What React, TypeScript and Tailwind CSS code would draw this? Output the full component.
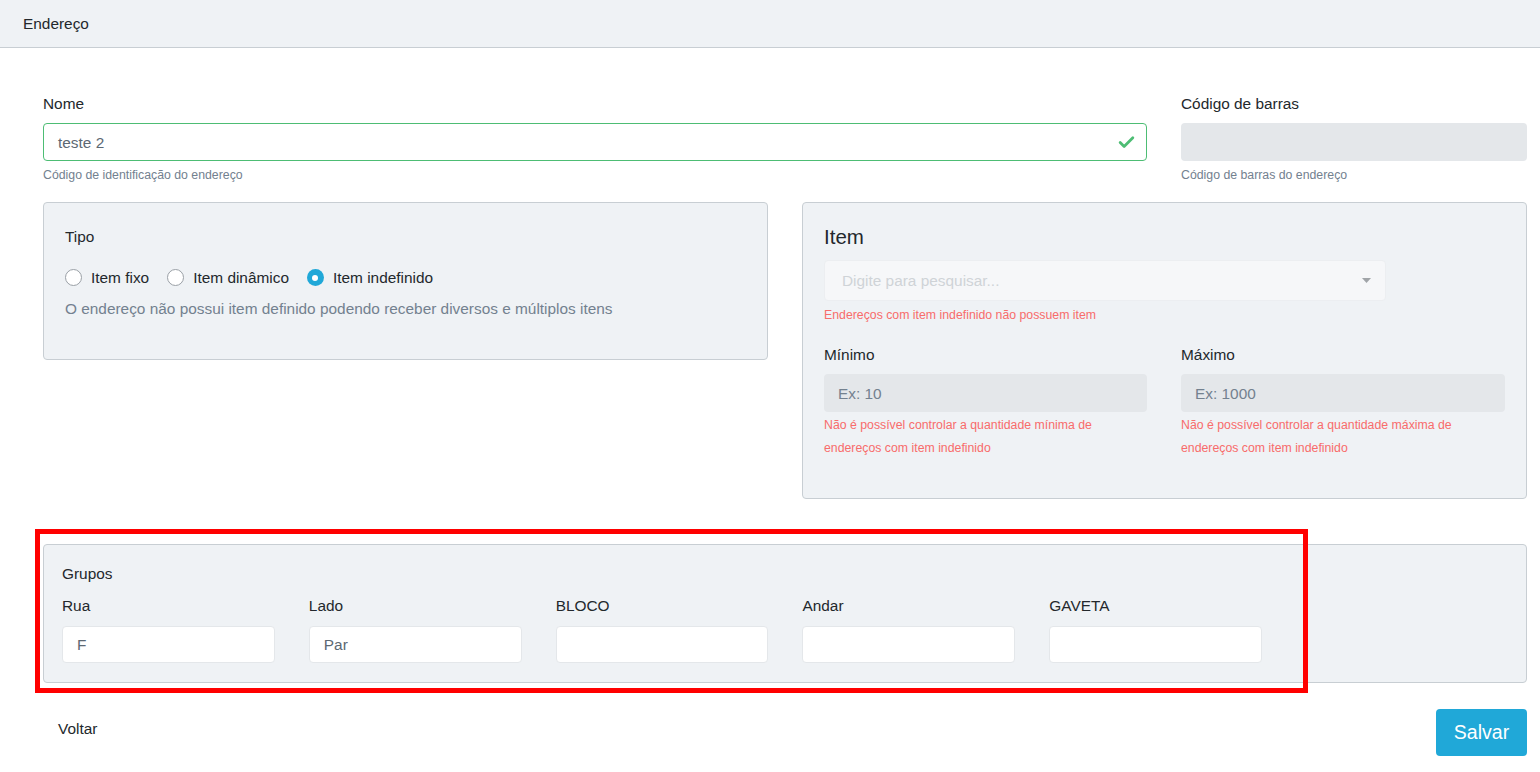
import { Check } from "lucide-react";

const font = { fontFamily: '"Liberation Sans", Arial, sans-serif' };

function Radio({ label, checked }: { label: string; checked?: boolean }) {
  return (
    <label className="flex items-center gap-[9px]">
      {checked ? (
        <span className="grid h-[17px] w-[17px] place-items-center rounded-full bg-[#20a8d8]">
          <span className="h-[6px] w-[6px] rounded-full bg-white" />
        </span>
      ) : (
        <span className="h-[17px] w-[17px] rounded-full border border-[#9aa0a6] bg-white" />
      )}
      <span>{label}</span>
    </label>
  );
}

function GroupField({ label, value }: { label: string; value?: string }) {
  return (
    <div>
      <div className="leading-[21px]">{label}</div>
      <div className="mt-[10px] flex h-[37px] items-center rounded border border-[#e4e7ea] bg-white px-[14px] pt-[1px] text-[#5c6873]">
        {value}
      </div>
    </div>
  );
}

export default function App() {
  return (
    <div style={font} className="relative min-h-[772px] bg-white text-[15.4px] text-[#23282c]">
      <div className="flex h-[48px] items-center border-b border-[#c8ced3] bg-[#eff2f5] px-[23px]">
        Endereço
      </div>

      <div className="pl-[43px] pr-[13px] pt-[45px]">
        {/* nome / codigo */}
        <div className="flex gap-[34px]">
          <div className="w-[1104px]">
            <div className="leading-[21px]">Nome</div>
            <div className="mt-[9px] flex h-[38px] items-center justify-between rounded border border-[#4dbd74] bg-white pl-[14px] pr-[10px] pt-[1px] text-[#5c6873]">
              <span>teste 2</span>
              <Check size={19} strokeWidth={3.5} className="text-[#4dbd74]" />
            </div>
            <div className="mt-[6px] text-[12.3px] leading-[17px] text-[#73818f]">
              Código de identificação do endereço
            </div>
          </div>
          <div className="flex-1">
            <div className="leading-[21px]">Código de barras</div>
            <div className="mt-[9px] h-[38px] rounded bg-[#e4e7ea]" />
            <div className="mt-[6px] text-[12.3px] leading-[17px] text-[#73818f]">
              Código de barras do endereço
            </div>
          </div>
        </div>

        {/* tipo / item */}
        <div className="mt-[18px] flex items-start gap-[34px]">
          <div className="h-[158px] w-[725px] rounded border border-[#c8ced3] bg-[#eff2f5] px-[21px] pt-[23px]">
            <div className="leading-[21px]">Tipo</div>
            <div className="mt-[20px] flex h-[21px] items-center gap-[18px]">
              <Radio label="Item fixo" />
              <Radio label="Item dinâmico" />
              <Radio label="Item indefinido" checked />
            </div>
            <div className="mt-[10px] leading-[21px] text-[#73818f]">
              O endereço não possui item definido podendo receber diversos e múltiplos itens
            </div>
          </div>

          <div className="h-[297px] w-[725px] rounded border border-[#c8ced3] bg-[#eff2f5] px-[21px] pt-[22px]">
            <div className="text-[20.5px] leading-[24px]">Item</div>
            <div className="mt-[11px] flex h-[41px] w-[562px] items-center justify-between rounded border border-[#eceef1] bg-[#f6f7f9] pl-[17px] pr-[14px] text-[#cfd3d7]">
              <span>Digite para pesquisar...</span>
              <svg width="9" height="5" viewBox="0 0 9 5">
                <path d="M0 0h9L4.5 5z" fill="#a0a4a8" />
              </svg>
            </div>
            <div className="mt-[6px] text-[12.3px] leading-[17px] text-[#f86c6b]">
              Endereços com item indefinido não possuem item
            </div>
            <div className="mt-[20px] flex gap-[34px]">
              <div className="w-[323px]">
                <div className="leading-[21px]">Mínimo</div>
                <div className="mt-[9px] flex h-[38px] items-center rounded bg-[#e4e7ea] px-[14px] pt-[1px] text-[#73818f]">
                  Ex: 10
                </div>
                <div className="mt-[2px] text-[12.3px] leading-[23px] text-[#f86c6b]">
                  Não é possível controlar a quantidade mínima de endereços com item indefinido
                </div>
              </div>
              <div className="w-[324px]">
                <div className="leading-[21px]">Máximo</div>
                <div className="mt-[9px] flex h-[38px] items-center rounded bg-[#e4e7ea] px-[14px] pt-[1px] text-[#73818f]">
                  Ex: 1000
                </div>
                <div className="mt-[2px] text-[12.3px] leading-[23px] text-[#f86c6b]">
                  Não é possível controlar a quantidade máxima de endereços com item indefinido
                </div>
              </div>
            </div>
          </div>
        </div>

        {/* grupos */}
        <div className="mt-[45px] h-[139px] rounded border border-[#c8ced3] bg-[#eff2f5] pl-[18px] pr-[18px] pt-[18px]">
          <div className="leading-[21px]">Grupos</div>
          <div className="mt-[11px] grid w-[1447px] grid-cols-6 gap-x-[34px]">
            <GroupField label="Rua" value="F" />
            <GroupField label="Lado" value="Par" />
            <GroupField label="BLOCO" />
            <GroupField label="Andar" />
            <GroupField label="GAVETA" />
          </div>
        </div>

        {/* footer */}
        <div className="mt-[26px] flex items-start justify-between">
          <button className="ml-[15px] mt-[9px] leading-[21px]">Voltar</button>
          <button className="h-[47px] w-[91px] rounded bg-[#20a8d8] text-[19.5px] text-white">
            Salvar
          </button>
        </div>
      </div>

      {/* annotation */}
      <div className="pointer-events-none absolute left-[35px] top-[529px] h-[164px] w-[1273px] border-[5px] border-[#ff0000]" />
    </div>
  );
}
